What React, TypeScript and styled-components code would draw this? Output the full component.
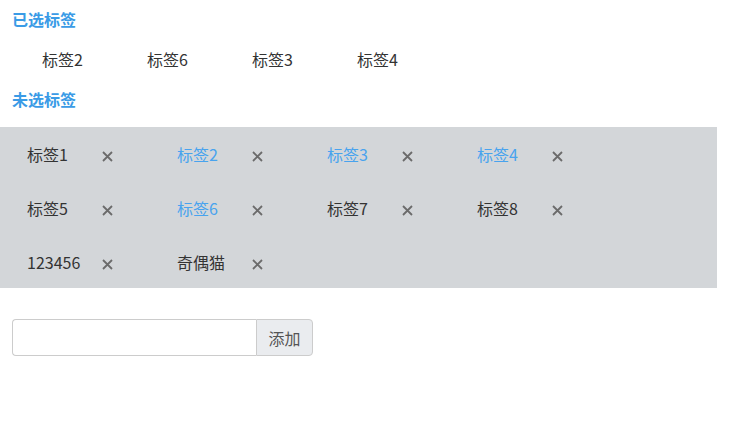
import React, { useState } from 'react'
import styled, { createGlobalStyle } from 'styled-components'

const GlobalStyle = createGlobalStyle`
  body {
    margin: 0;
    background: #fff;
    font-family: "Noto Sans CJK SC", "Noto Sans", "Liberation Sans", sans-serif;
    color: #333;
  }
`

interface Tag {
  id: number
  name: string
}

const initialTags: Tag[] = [
  { id: 1, name: '标签1' },
  { id: 2, name: '标签2' },
  { id: 3, name: '标签3' },
  { id: 4, name: '标签4' },
  { id: 5, name: '标签5' },
  { id: 6, name: '标签6' },
  { id: 7, name: '标签7' },
  { id: 8, name: '标签8' },
  { id: 9, name: '123456' },
  { id: 10, name: '奇偶猫' },
]

const CloseIcon = () => (
  <svg width="11" height="11" viewBox="0 0 11 11">
    <path d="M1 1 L10 10 M10 1 L1 10" stroke="#6b6b6b" strokeWidth="1.8" strokeLinecap="butt" />
  </svg>
)

const App: React.FC = () => {
  const [tags, setTags] = useState<Tag[]>(initialTags)
  const [selected, setSelected] = useState<number[]>([2, 6, 3, 4])
  const [input, setInput] = useState('')

  const toggle = (id: number) => {
    setSelected(s => (s.includes(id) ? s.filter(x => x !== id) : [...s, id]))
  }

  const remove = (id: number) => {
    setTags(t => t.filter(x => x.id !== id))
    setSelected(s => s.filter(x => x !== id))
  }

  const add = () => {
    if (!input.trim()) return
    setTags(t => [...t, { id: Date.now(), name: input.trim() }])
    setInput('')
  }

  return (
    <>
      <GlobalStyle />
      <Title>已选标签</Title>
      <SelectedRow>
        {selected.map(id => {
          const tag = tags.find(t => t.id === id)
          return tag ? <SelectedItem key={id}>{tag.name}</SelectedItem> : null
        })}
      </SelectedRow>
      <Title>未选标签</Title>
      <TagBox>
        {tags.map(tag => (
          <TagItem key={tag.id}>
            <TagName active={selected.includes(tag.id)} onClick={() => toggle(tag.id)}>
              {tag.name}
            </TagName>
            <RemoveButton onClick={() => remove(tag.id)}>
              <CloseIcon />
            </RemoveButton>
          </TagItem>
        ))}
      </TagBox>
      <InputGroup>
        <TagInput value={input} onChange={e => setInput(e.target.value)} />
        <AddButton onClick={add}>添加</AddButton>
      </InputGroup>
    </>
  )
}

const Title = styled.div`
  height: 38px;
  line-height: 38px;
  padding-left: 12px;
  font-size: 16px;
  font-weight: bold;
  color: #3a9be6;
`

const SelectedRow = styled.div`
  display: flex;
  height: 42px;
  align-items: center;
  padding-left: 42px;
`

const SelectedItem = styled.span`
  width: 105px;
  font-size: 16px;
  color: #333;
`

const TagBox = styled.div`
  margin-top: 9px;
  width: 717px;
  height: 161px;
  background: #d3d6d9;
  display: grid;
  grid-template-columns: repeat(4, 150px);
  grid-auto-rows: 54px;
  padding-left: 27px;
  box-sizing: border-box;
`

const TagItem = styled.div`
  display: flex;
  align-items: center;
`

const TagName = styled.span<{ active: boolean }>`
  width: 75px;
  font-size: 16px;
  cursor: pointer;
  color: ${props => (props.active ? '#48a3ee' : '#333')};
`

const RemoveButton = styled.span`
  display: flex;
  margin-top: 4px;
  cursor: pointer;
`

const InputGroup = styled.div`
  display: flex;
  margin: 31px 0 0 12px;
`

const TagInput = styled.input`
  width: 244px;
  height: 37px;
  box-sizing: border-box;
  border: 1px solid #ccc;
  border-right: none;
  border-radius: 4px 0 0 4px;
  outline: none;
  padding: 0 10px;
  font-size: 14px;
`

const AddButton = styled.button`
  width: 57px;
  height: 37px;
  box-sizing: border-box;
  border: 1px solid #ccc;
  border-radius: 0 4px 4px 0;
  background: #eaecef;
  color: #555;
  font-size: 16px;
  font-family: inherit;
  padding: 0;
  cursor: pointer;
`

export default App
